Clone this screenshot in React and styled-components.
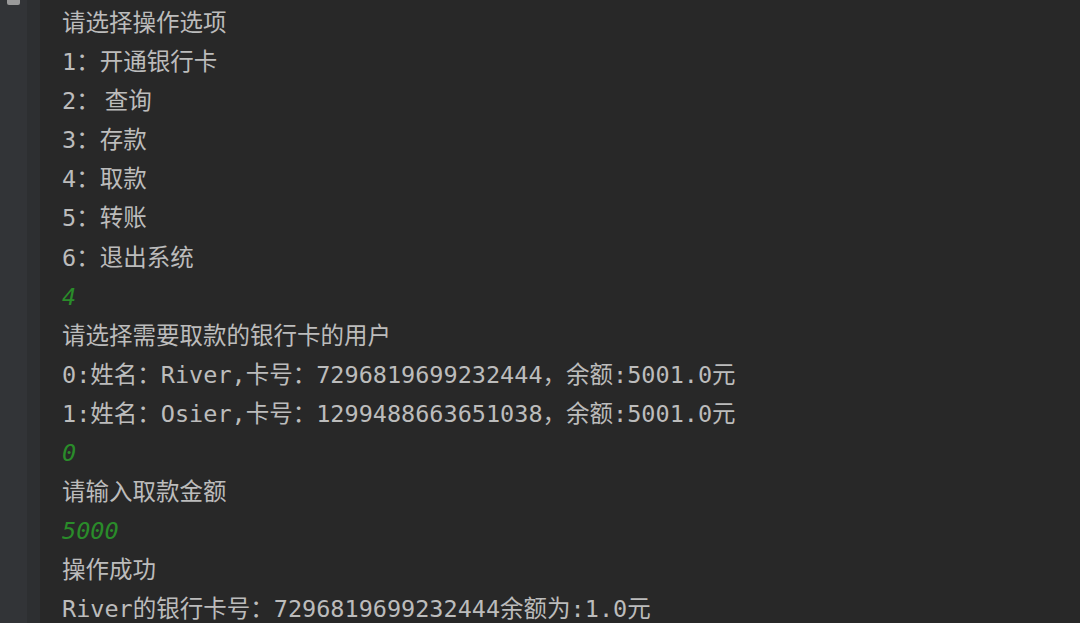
import React from "react";
import styled, { createGlobalStyle } from "styled-components";

const GlobalStyle = createGlobalStyle`
  html, body {
    margin: 0;
    padding: 0;
    background: #282828;
    overflow: hidden;
  }
`;

const lines = [
  { text: "请选择操作选项" },
  { text: "1：开通银行卡" },
  { text: "2：", rest: "查询" },
  { text: "3：存款" },
  { text: "4：取款" },
  { text: "5：转账" },
  { text: "6：退出系统" },
  { text: "4", input: true },
  { text: "请选择需要取款的银行卡的用户" },
  { text: "0:姓名：River,卡号：7296819699232444，余额:5001.0元" },
  { text: "1:姓名：Osier,卡号：1299488663651038，余额:5001.0元" },
  { text: "0", input: true },
  { text: "请输入取款金额" },
  { text: "5000", input: true },
  { text: "操作成功" },
  { text: "River的银行卡号：7296819699232444余额为:1.0元" },
];

const Console = () => {
  return (
    <Wrapper>
      <GlobalStyle />
      <Gutter>
        <GutterStrip>
          <ScrollThumb />
        </GutterStrip>
        <GutterEdge />
      </Gutter>
      <Output>
        {lines.map((line, i) => (
          <Line key={i} $input={line.input}>
            {line.text}
            {line.rest && (
              <>
                <Gap />
                {line.rest}
              </>
            )}
          </Line>
        ))}
      </Output>
    </Wrapper>
  );
};

const Wrapper = styled.div`
  display: flex;
  width: 1080px;
  height: 623px;
  background: #282828;
  overflow: hidden;
`;

const Gutter = styled.div`
  display: flex;
  width: 40px;
  flex-shrink: 0;
`;

const GutterStrip = styled.div`
  width: 27px;
  background: #323437;
  position: relative;
`;

const GutterEdge = styled.div`
  flex: 1;
  background: #2d2f31;
`;

const ScrollThumb = styled.div`
  position: absolute;
  left: 7px;
  top: -4px;
  width: 13px;
  height: 9px;
  border-radius: 2px;
  background: #9a9a9a;
`;

const Output = styled.div`
  display: flex;
  flex-direction: column;
  padding: 4px 0 0 22px;
`;

const Line = styled.div`
  height: 39.1px;
  line-height: 39.1px;
  white-space: pre;
  font-family: "DejaVu Sans Mono", "Noto Sans CJK SC", monospace;
  font-size: 23.5px;
  color: ${({ $input }) => ($input ? "#2a8c2a" : "#bcbcbc")};
  font-style: ${({ $input }) => ($input ? "italic" : "normal")};
`;

const Gap = styled.span`
  display: inline-block;
  width: 5px;
`;

export default Console;
